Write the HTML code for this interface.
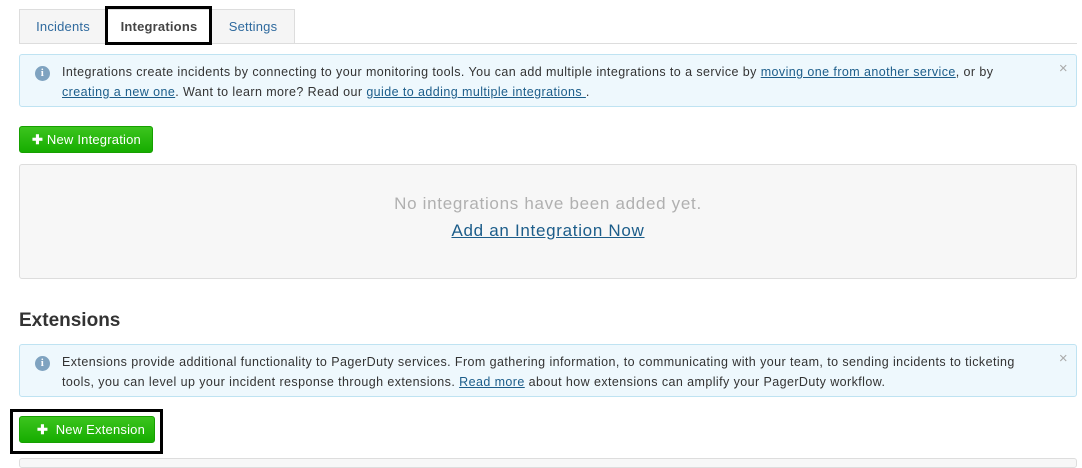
<!DOCTYPE html>
<html><head><style>
body{margin:0;background:#fff;font-family:"Liberation Sans",sans-serif;width:1082px;height:463px;overflow:hidden;position:relative;color:#333}
.a{position:absolute}
.tab{position:absolute;top:9px;height:34px;box-sizing:border-box;border:1px solid #ddd;border-bottom:none;background:#f5f5f5;color:#2f6a9e;font-size:13px;text-align:center;line-height:33px;letter-spacing:0.2px}
.info{position:absolute;left:19px;width:1058px;height:53px;box-sizing:border-box;background:#eef8fd;border:1px solid #bfe3f2;border-radius:3px;font-size:12.5px;letter-spacing:0.42px;line-height:20px;padding:7px 40px 0 42px;color:#333}
.info a{color:#1c5d8a;text-decoration:underline}
.ic{position:absolute;left:15px;top:11px;width:15px;height:15px;border-radius:50%;background:#7fa3c0;color:#fff;font:bold 11px/15px "Liberation Serif",serif;text-align:center}
.x{position:absolute;right:8px;top:4px;color:#aaa;font-size:15px}
.btn{position:absolute;left:19px;height:27px;box-sizing:border-box;background:linear-gradient(#3cc41e,#16ad00);border:1px solid #16a000;border-radius:3px;color:#fff;font-size:13px;line-height:25px;letter-spacing:0.2px}
</style></head><body>
<div class="a" style="left:19px;top:43px;width:1058px;height:1px;background:#ddd"></div>
<div class="tab" style="left:19px;width:88px">Incidents</div>
<div class="tab" style="left:106px;width:106px;background:#fff;color:#444;font-weight:bold">Integrations</div>
<div class="tab" style="left:211px;width:84px">Settings</div>
<div class="a" style="left:105px;top:6px;width:101px;height:33px;border:3px solid #000"></div>

<div class="info" style="top:54px"><div class="ic">i</div><span class="x">×</span>Integrations create incidents by connecting to your monitoring tools. You can add multiple integrations to a service by <a>moving one from another service</a>, or by<br><a>creating a new one</a>. Want to learn more? Read our <a>guide to adding multiple integrations </a>.</div>

<div class="btn" style="top:126px;width:134px;padding-left:12px"><b>✚</b> New Integration</div>

<div class="a" style="left:19px;top:164px;width:1058px;height:115px;box-sizing:border-box;background:#f7f7f7;border:1px solid #ddd;border-radius:3px;text-align:center">
<div style="margin-top:28px;font-size:17px;letter-spacing:0.7px;color:#b0b0b0;line-height:22px">No integrations have been added yet.</div>
<div style="margin-top:5px;font-size:17px;letter-spacing:0.7px;color:#1c5d8a;text-decoration:underline;line-height:22px">Add an Integration Now</div>
</div>

<div class="a" style="left:19px;top:310px;font-size:19px;font-weight:bold;color:#333">Extensions</div>

<div class="info" style="top:344px"><div class="ic">i</div><span class="x">×</span>Extensions provide additional functionality to PagerDuty services. From gathering information, to communicating with your team, to sending incidents to ticketing<br>tools, you can level up your incident response through extensions. <a>Read more</a> about how extensions can amplify your PagerDuty workflow.</div>

<div class="a" style="left:10px;top:409px;width:147px;height:39px;border:3px solid #000"></div>
<div class="btn" style="top:416px;width:136px;padding-left:17px"><b>✚</b>&nbsp; New Extension</div>
<div class="a" style="left:19px;top:458px;width:1058px;height:10px;box-sizing:border-box;background:#f7f7f7;border:1px solid #ddd;border-radius:3px"></div>
</body></html>
